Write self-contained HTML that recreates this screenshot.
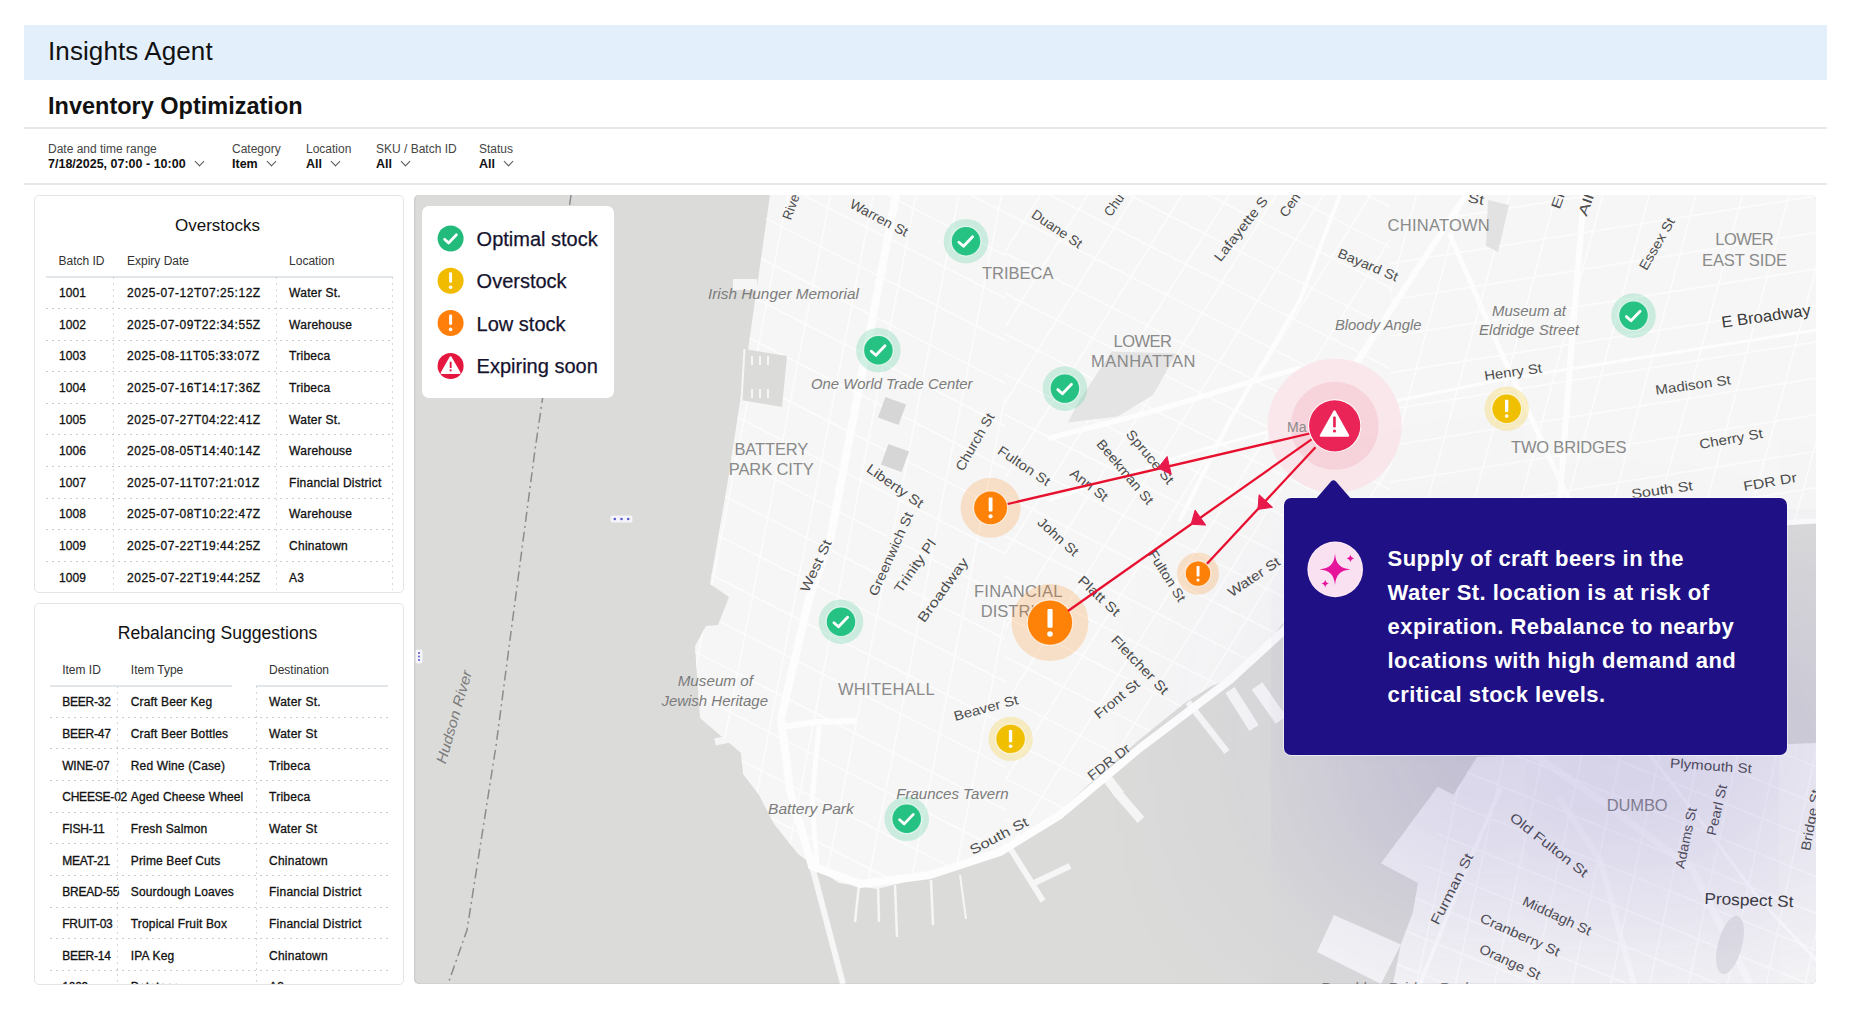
<!DOCTYPE html>
<html><head><meta charset="utf-8">
<style>
*{box-sizing:border-box;margin:0;padding:0}
html,body{width:1850px;height:1014px;overflow:hidden;background:#fff;font-family:"Liberation Sans",sans-serif;color:#111}
.abs{position:absolute}
#hdr{left:24px;top:25px;width:1803px;height:55px;background:#e3f0fc}
#hdr span{position:absolute;left:24px;top:11px;font-size:26px;color:#111;letter-spacing:0.1px}
#title{left:48px;top:94.5px;font-size:23.5px;font-weight:700;color:#111;line-height:1}
.hline{height:2px;background:#e6e8ea;left:24px;width:1803px}
.flt{font-size:12px;color:#444;line-height:14px}
.flt b{display:block;color:#111;font-size:12.5px;line-height:16px}
.chev{display:inline-block;width:7px;height:7px;border-right:1.3px solid #333;border-bottom:1.3px solid #333;transform:rotate(45deg);margin-left:10px;position:relative;top:-3px;border-color:#555}
.panel{left:34px;width:370px;border:1.5px solid #e2e4e6;border-radius:5px;background:#fff;overflow:hidden}
.panel>div{position:absolute;margin-left:-1.5px;margin-top:-1.5px}
.ptitle{left:0;width:100%;text-align:center;font-size:17px;color:#111;line-height:1}
.th{font-size:12px;color:#333;line-height:1;white-space:nowrap}
.td{font-size:12px;color:#111;line-height:1;-webkit-text-stroke:0.3px #111;white-space:nowrap;letter-spacing:0.62px}
.solid{height:2px;background:#e3e6e9}
.dotH{height:1px;background:repeating-linear-gradient(90deg,#c9cdd1 0 2px,transparent 2px 6px)}
.dotV{width:1px;background:repeating-linear-gradient(180deg,#d5d8db 0 2px,transparent 2px 6px)}
#map{left:414px;top:195px;width:1402px;height:789px;border-radius:5px;overflow:hidden;background:#d9d9d9}
#map svg{position:absolute;left:0;top:0}
#legend{left:422px;top:206px;width:192px;height:192px;background:#fff;border-radius:7px}
.lg{position:absolute;left:54.6px;font-size:20px;color:#15132e;line-height:1;white-space:nowrap;-webkit-text-stroke:0.25px #15132e}
#callout{left:1284px;top:498px;width:503px;height:257px;background:#1f1185;border-radius:7px;box-shadow:0 0 0 1px rgba(255,255,255,0.55)}
#callout p{position:absolute;left:103.5px;top:44px;font-size:22px;font-weight:700;color:#fff;line-height:34px;letter-spacing:0.46px;white-space:nowrap}

</style></head>
<body>
<div id="hdr" class="abs"><span>Insights Agent</span></div>
<div id="title" class="abs">Inventory Optimization</div>
<div class="abs hline" style="top:127px"></div>
<div class="abs flt" style="left:48px;top:142px">Date and time range<b>7/18/2025, 07:00 - 10:00<i class="chev"></i></b></div>
<div class="abs flt" style="left:232px;top:142px">Category<b>Item<i class="chev"></i></b></div>
<div class="abs flt" style="left:306px;top:142px">Location<b>All<i class="chev"></i></b></div>
<div class="abs flt" style="left:376px;top:142px">SKU / Batch ID<b>All<i class="chev"></i></b></div>
<div class="abs flt" style="left:479px;top:142px">Status<b>All<i class="chev"></i></b></div>
<div class="abs hline" style="top:183px"></div>
<div id="p1" class="abs panel" style="top:195px;height:398px">
<div class="ptitle" style="top:22.5px">Overstocks</div>
<div class="th" style="left:25.0px;top:60.1px">Batch ID</div>
<div class="th" style="left:93.5px;top:60.1px">Expiry Date</div>
<div class="th" style="left:255.6px;top:60.1px">Location</div>
<div class="solid" style="left:12px;top:81px;width:347px"></div>
<div class="td" style="left:25.5px;top:92.7px;letter-spacing:0.1px">1001</div>
<div class="td" style="left:93.5px;top:92.7px;letter-spacing:0.55px">2025-07-12T07:25:12Z</div>
<div class="td" style="left:255.6px;top:92.7px;letter-spacing:0.25px">Water St.</div>
<div class="dotH" style="left:12px;top:113.5px;width:347px"></div>
<div class="td" style="left:25.5px;top:124.3px;letter-spacing:0.1px">1002</div>
<div class="td" style="left:93.5px;top:124.3px;letter-spacing:0.55px">2025-07-09T22:34:55Z</div>
<div class="td" style="left:255.6px;top:124.3px;letter-spacing:0.25px">Warehouse</div>
<div class="dotH" style="left:12px;top:145.1px;width:347px"></div>
<div class="td" style="left:25.5px;top:155.9px;letter-spacing:0.1px">1003</div>
<div class="td" style="left:93.5px;top:155.9px;letter-spacing:0.55px">2025-08-11T05:33:07Z</div>
<div class="td" style="left:255.6px;top:155.9px;letter-spacing:0.25px">Tribeca</div>
<div class="dotH" style="left:12px;top:176.7px;width:347px"></div>
<div class="td" style="left:25.5px;top:187.5px;letter-spacing:0.1px">1004</div>
<div class="td" style="left:93.5px;top:187.5px;letter-spacing:0.55px">2025-07-16T14:17:36Z</div>
<div class="td" style="left:255.6px;top:187.5px;letter-spacing:0.25px">Tribeca</div>
<div class="dotH" style="left:12px;top:208.3px;width:347px"></div>
<div class="td" style="left:25.5px;top:219.1px;letter-spacing:0.1px">1005</div>
<div class="td" style="left:93.5px;top:219.1px;letter-spacing:0.55px">2025-07-27T04:22:41Z</div>
<div class="td" style="left:255.6px;top:219.1px;letter-spacing:0.25px">Water St.</div>
<div class="dotH" style="left:12px;top:239.9px;width:347px"></div>
<div class="td" style="left:25.5px;top:250.7px;letter-spacing:0.1px">1006</div>
<div class="td" style="left:93.5px;top:250.7px;letter-spacing:0.55px">2025-08-05T14:40:14Z</div>
<div class="td" style="left:255.6px;top:250.7px;letter-spacing:0.25px">Warehouse</div>
<div class="dotH" style="left:12px;top:271.5px;width:347px"></div>
<div class="td" style="left:25.5px;top:282.3px;letter-spacing:0.1px">1007</div>
<div class="td" style="left:93.5px;top:282.3px;letter-spacing:0.55px">2025-07-11T07:21:01Z</div>
<div class="td" style="left:255.6px;top:282.3px;letter-spacing:0.25px">Financial District</div>
<div class="dotH" style="left:12px;top:303.1px;width:347px"></div>
<div class="td" style="left:25.5px;top:313.9px;letter-spacing:0.1px">1008</div>
<div class="td" style="left:93.5px;top:313.9px;letter-spacing:0.55px">2025-07-08T10:22:47Z</div>
<div class="td" style="left:255.6px;top:313.9px;letter-spacing:0.25px">Warehouse</div>
<div class="dotH" style="left:12px;top:334.7px;width:347px"></div>
<div class="td" style="left:25.5px;top:345.5px;letter-spacing:0.1px">1009</div>
<div class="td" style="left:93.5px;top:345.5px;letter-spacing:0.55px">2025-07-22T19:44:25Z</div>
<div class="td" style="left:255.6px;top:345.5px;letter-spacing:0.25px">Chinatown</div>
<div class="dotH" style="left:12px;top:366.3px;width:347px"></div>
<div class="td" style="left:25.5px;top:377.1px;letter-spacing:0.1px">1009</div>
<div class="td" style="left:93.5px;top:377.1px;letter-spacing:0.55px">2025-07-22T19:44:25Z</div>
<div class="td" style="left:255.6px;top:377.1px;letter-spacing:0.25px">A3</div>
<div class="dotV" style="left:79.0px;top:82px;height:313px"></div>
<div class="dotV" style="left:242.5px;top:82px;height:313px"></div>
<div class="dotV" style="left:358.2px;top:82px;height:313px"></div>
</div>
<div id="p2" class="abs panel" style="top:603px;height:382px">
<div class="ptitle" style="top:22.8px;font-size:17.6px">Rebalancing Suggestions</div>
<div class="th" style="left:28.7px;top:61.2px">Item ID</div>
<div class="th" style="left:97.3px;top:61.2px">Item Type</div>
<div class="th" style="left:235.5px;top:61.2px">Destination</div>
<div class="solid" style="left:16px;top:82px;width:182px"></div>
<div class="solid" style="left:222.5px;top:82px;width:131.5px"></div>
<div class="td" style="left:28.7px;top:93.9px;letter-spacing:-0.2px">BEER-32</div>
<div class="td" style="left:97.3px;top:93.9px;letter-spacing:0.15px">Craft Beer Keg</div>
<div class="td" style="left:235.5px;top:93.9px;letter-spacing:0.25px">Water St.</div>
<div class="dotH" style="left:16px;top:114.3px;width:338px"></div>
<div class="td" style="left:28.7px;top:125.6px;letter-spacing:-0.2px">BEER-47</div>
<div class="td" style="left:97.3px;top:125.6px;letter-spacing:0.15px">Craft Beer Bottles</div>
<div class="td" style="left:235.5px;top:125.6px;letter-spacing:0.25px">Water St</div>
<div class="dotH" style="left:16px;top:145.9px;width:338px"></div>
<div class="td" style="left:28.7px;top:157.2px;letter-spacing:-0.2px">WINE-07</div>
<div class="td" style="left:97.3px;top:157.2px;letter-spacing:0.15px">Red Wine (Case)</div>
<div class="td" style="left:235.5px;top:157.2px;letter-spacing:0.25px">Tribeca</div>
<div class="dotH" style="left:16px;top:177.6px;width:338px"></div>
<div class="td" style="left:28.7px;top:188.9px;letter-spacing:-0.2px">CHEESE-02</div>
<div class="td" style="left:97.3px;top:188.9px;letter-spacing:0.15px">Aged Cheese Wheel</div>
<div class="td" style="left:235.5px;top:188.9px;letter-spacing:0.25px">Tribeca</div>
<div class="dotH" style="left:16px;top:209.2px;width:338px"></div>
<div class="td" style="left:28.7px;top:220.5px;letter-spacing:-0.2px">FISH-11</div>
<div class="td" style="left:97.3px;top:220.5px;letter-spacing:0.15px">Fresh Salmon</div>
<div class="td" style="left:235.5px;top:220.5px;letter-spacing:0.25px">Water St</div>
<div class="dotH" style="left:16px;top:240.9px;width:338px"></div>
<div class="td" style="left:28.7px;top:252.2px;letter-spacing:-0.2px">MEAT-21</div>
<div class="td" style="left:97.3px;top:252.2px;letter-spacing:0.15px">Prime Beef Cuts</div>
<div class="td" style="left:235.5px;top:252.2px;letter-spacing:0.25px">Chinatown</div>
<div class="dotH" style="left:16px;top:272.5px;width:338px"></div>
<div class="td" style="left:28.7px;top:283.8px;letter-spacing:-0.2px">BREAD-55</div>
<div class="td" style="left:97.3px;top:283.8px;letter-spacing:0.15px">Sourdough Loaves</div>
<div class="td" style="left:235.5px;top:283.8px;letter-spacing:0.25px">Financial District</div>
<div class="dotH" style="left:16px;top:304.2px;width:338px"></div>
<div class="td" style="left:28.7px;top:315.5px;letter-spacing:-0.2px">FRUIT-03</div>
<div class="td" style="left:97.3px;top:315.5px;letter-spacing:0.15px">Tropical Fruit Box</div>
<div class="td" style="left:235.5px;top:315.5px;letter-spacing:0.25px">Financial District</div>
<div class="dotH" style="left:16px;top:335.8px;width:338px"></div>
<div class="td" style="left:28.7px;top:347.1px;letter-spacing:-0.2px">BEER-14</div>
<div class="td" style="left:97.3px;top:347.1px;letter-spacing:0.15px">IPA Keg</div>
<div class="td" style="left:235.5px;top:347.1px;letter-spacing:0.25px">Chinatown</div>
<div class="dotH" style="left:16px;top:367.5px;width:338px"></div>
<div class="td" style="left:28.7px;top:378.8px;letter-spacing:-0.2px">1009</div>
<div class="td" style="left:97.3px;top:378.8px;letter-spacing:0.15px">Potatoes</div>
<div class="td" style="left:235.5px;top:378.8px;letter-spacing:0.25px">A3</div>
<div class="dotH" style="left:16px;top:399.1px;width:338px"></div>
<div class="dotV" style="left:83.5px;top:83px;height:400px"></div>
<div class="dotV" style="left:222.0px;top:83px;height:400px"></div>
</div>
<div id="map" class="abs">
<svg width="1402" height="789" viewBox="414 195 1402 789">
<defs>
<clipPath id="cm"><path d="M770 195 L1816 195 L1816 521 L1500 540 L1300 600 L1275 634 L1242 672 L1210 687 L1186 702 L1139 740 L1088 785 L1050 820 L1010 845 L996 857 L957 869 L877 889 L839 883 L818 869 L798 854 L774 824 L759 795 L743 774 L741 753 L728 742 L700 718 L695 646 L706 626 L718 625 L729 597 L710 584 L728 480 L749 343 Z"/></clipPath>
<clipPath id="cb"><path d="M1816 743 L1816 984 L1393 984 L1400.8 944.6 L1413 912 L1418 883 L1452 797 L1477 757 Z"/></clipPath>
</defs>
<rect x="414" y="195" width="1402" height="789" fill="#dbdbda"/>
<path d="M770 195 L1816 195 L1816 521 L1500 540 L1300 600 L1275 634 L1242 672 L1210 687 L1186 702 L1139 740 L1088 785 L1050 820 L1010 845 L996 857 L957 869 L877 889 L839 883 L818 869 L798 854 L774 824 L759 795 L743 774 L741 753 L728 742 L700 718 L695 646 L706 626 L718 625 L729 597 L710 584 L728 480 L749 343 Z" fill="#f6f6f6"/>
<path d="M1816 743 L1816 984 L1393 984 L1400.8 944.6 L1413 912 L1418 883 L1452 797 L1477 757 Z" fill="#f6f6f6"/>
<path d="M1437.7 786.8 L1457.5 796.7 L1418 883 L1381 863.2 Z" fill="#f6f6f6"/>
<path d="M1334 915 L1400.8 944.6 L1381 984 L1317 952 Z" fill="#f6f6f6"/>
<line x1="1010.0" y1="848.0" x2="1043.0" y2="901.0" stroke="#f6f6f6" stroke-width="6"/>
<line x1="1034.0" y1="883.0" x2="1070.0" y2="866.0" stroke="#f6f6f6" stroke-width="6"/>
<line x1="1188.0" y1="702.0" x2="1227.0" y2="752.0" stroke="#f6f6f6" stroke-width="6.5"/>
<line x1="1103.0" y1="773.0" x2="1120.0" y2="795.0" stroke="#f6f6f6" stroke-width="10"/>
<line x1="1115.0" y1="790.0" x2="1141.0" y2="820.0" stroke="#f6f6f6" stroke-width="9"/>
<line x1="1230.0" y1="690.0" x2="1254.0" y2="728.0" stroke="#f6f6f6" stroke-width="11"/>
<line x1="1257.0" y1="686.0" x2="1281.0" y2="720.0" stroke="#f6f6f6" stroke-width="13"/>
<line x1="715.0" y1="742.0" x2="753.0" y2="734.0" stroke="#f6f6f6" stroke-width="7"/>
<line x1="859.0" y1="885.0" x2="855.0" y2="922.0" stroke="#f6f6f6" stroke-width="2.5"/>
<line x1="878.0" y1="885.0" x2="879.0" y2="922.0" stroke="#f6f6f6" stroke-width="2.5"/>
<line x1="895.0" y1="885.0" x2="897.0" y2="937.0" stroke="#f6f6f6" stroke-width="2.5"/>
<line x1="931.0" y1="880.0" x2="933.0" y2="925.0" stroke="#f6f6f6" stroke-width="2.5"/>
<line x1="960.0" y1="875.0" x2="966.0" y2="919.0" stroke="#f6f6f6" stroke-width="2"/>
<rect x="733" y="279" width="24" height="11" fill="#f6f6f6"/>
<line x1="812.0" y1="866.0" x2="843.0" y2="984.0" stroke="#f6f6f6" stroke-width="6"/>
<g clip-path="url(#cm)"><clipPath id="z25"><rect x="690" y="195" width="315" height="705"/></clipPath><path clip-path="url(#z25)" d="M-83.2 1153.2L211.5 -362.8M-41.9 1161.2L252.7 -354.7M-0.7 1169.2L294.0 -346.7M40.5 1177.3L335.2 -338.7M81.7 1185.3L376.4 -330.7M123.0 1193.3L417.6 -322.7M164.2 1201.3L458.9 -314.7M205.4 1209.3L500.1 -306.7M246.7 1217.3L541.3 -298.6M287.9 1225.3L582.6 -290.6M329.1 1233.4L623.8 -282.6M370.3 1241.4L665.0 -274.6M411.6 1249.4L706.2 -266.6M452.8 1257.4L747.5 -258.6M494.0 1265.4L788.7 -250.6M535.2 1273.4L829.9 -242.5M576.5 1281.4L871.2 -234.5M617.7 1289.5L912.4 -226.5M658.9 1297.5L953.6 -218.5M700.2 1305.5L994.8 -210.5M741.4 1313.5L1036.1 -202.5M782.6 1321.5L1077.3 -194.5M823.8 1329.5L1118.5 -186.4M865.1 1337.5L1159.8 -178.4M906.3 1345.6L1201.0 -170.4M947.5 1353.6L1242.2 -162.4M988.8 1361.6L1283.4 -154.4M1030.0 1369.6L1324.7 -146.4M1071.2 1377.6L1365.9 -138.4M1112.4 1385.6L1407.1 -130.3M1153.7 1393.6L1448.3 -122.3M1194.9 1401.7L1489.6 -114.3M1236.1 1409.7L1530.8 -106.3M1277.4 1417.7L1572.0 -98.3M1318.6 1425.7L1613.3 -90.3M1359.8 1433.7L1654.5 -82.3M1401.0 1441.7L1695.7 -74.2M1442.3 1449.7L1736.9 -66.2" stroke="#fcfcfc" stroke-width="1.6" fill="none" opacity="1"/></g>
<g clip-path="url(#cm)"><clipPath id="z26"><rect x="690" y="195" width="315" height="705"/></clipPath><path clip-path="url(#z26)" d="M517.2 -505.2L1893.3 195.9M500.0 -471.3L1876.0 229.8M482.7 -437.5L1858.8 263.7M465.5 -403.6L1841.5 297.5M448.2 -369.7L1824.2 331.4M431.0 -335.9L1807.0 365.2M413.7 -302.0L1789.7 399.1M396.5 -268.2L1772.5 433.0M379.2 -234.3L1755.2 466.8M362.0 -200.4L1738.0 500.7M344.7 -166.6L1720.7 534.5M327.5 -132.7L1703.5 568.4M310.2 -98.9L1686.2 602.2M293.0 -65.0L1669.0 636.1M275.7 -31.2L1651.7 670.0M258.5 2.7L1634.5 703.8M241.2 36.6L1617.2 737.7M224.0 70.4L1600.0 771.5M206.7 104.3L1582.7 805.4M189.5 138.1L1565.5 839.3M172.2 172.0L1548.2 873.1M154.9 205.9L1531.0 907.0M137.7 239.7L1513.7 940.8M120.4 273.6L1496.5 974.7M103.2 307.4L1479.2 1008.5M85.9 341.3L1462.0 1042.4M68.7 375.1L1444.7 1076.3M51.4 409.0L1427.5 1110.1M34.2 442.9L1410.2 1144.0M16.9 476.7L1393.0 1177.8M-0.3 510.6L1375.7 1211.7M-17.6 544.4L1358.5 1245.6M-34.8 578.3L1341.2 1279.4M-52.1 612.2L1324.0 1313.3M-69.3 646.0L1306.7 1347.1M-86.6 679.9L1289.4 1381.0M-103.8 713.7L1272.2 1414.8M-121.1 747.6L1254.9 1448.7M-138.3 781.4L1237.7 1482.6M-155.6 815.3L1220.4 1516.4M-172.8 849.2L1203.2 1550.3M-190.1 883.0L1185.9 1584.1" stroke="#fcfcfc" stroke-width="1.6" fill="none" opacity="1"/></g>
<g clip-path="url(#cm)"><clipPath id="z27"><rect x="1005" y="195" width="385" height="705"/></clipPath><path clip-path="url(#z27)" d="M59.5 783.6L910.8 -578.8M93.4 804.8L944.7 -557.7M127.3 826.0L978.7 -536.5M161.2 847.2L1012.6 -515.3M195.2 868.4L1046.5 -494.1M229.1 889.6L1080.4 -472.9M263.0 910.8L1114.3 -451.7M296.9 932.0L1148.3 -430.5M330.8 953.2L1182.2 -409.3M364.8 974.4L1216.1 -388.1M398.7 995.6L1250.0 -366.9M432.6 1016.7L1284.0 -345.7M466.5 1037.9L1317.9 -324.5M500.5 1059.1L1351.8 -303.3M534.4 1080.3L1385.7 -282.1M568.3 1101.5L1419.6 -260.9M602.2 1122.7L1453.6 -239.7M636.1 1143.9L1487.5 -218.5M670.1 1165.1L1521.4 -197.3M704.0 1186.3L1555.3 -176.1M737.9 1207.5L1589.2 -154.9M771.8 1228.7L1623.2 -133.7M805.8 1249.9L1657.1 -112.5M839.7 1271.1L1691.0 -91.3M873.6 1292.3L1724.9 -70.1M907.5 1313.5L1758.9 -48.9M941.4 1334.7L1792.8 -27.7M975.4 1355.9L1826.7 -6.5M1009.3 1377.1L1860.6 14.7M1043.2 1398.3L1894.5 35.9M1077.1 1419.5L1928.5 57.1M1111.0 1440.7L1962.4 78.3M1145.0 1461.9L1996.3 99.4M1178.9 1483.1L2030.2 120.6M1212.8 1504.3L2064.2 141.8M1246.7 1525.5L2098.1 163.0M1280.7 1546.7L2132.0 184.2M1314.6 1567.9L2165.9 205.4M1348.5 1589.1L2199.8 226.6M1382.4 1610.3L2233.8 247.8M1416.3 1631.5L2267.7 269.0M1450.3 1652.7L2301.6 290.2" stroke="#fcfcfc" stroke-width="1.6" fill="none" opacity="1"/></g>
<g clip-path="url(#cm)"><clipPath id="z28"><rect x="1005" y="195" width="385" height="705"/></clipPath><path clip-path="url(#z28)" d="M855.4 -550.5L2286.9 178.9M839.1 -518.4L2270.5 211.0M822.7 -486.3L2254.2 243.0M806.4 -454.2L2237.8 275.1M790.0 -422.2L2221.5 307.2M773.7 -390.1L2205.1 339.3M757.3 -358.0L2188.8 371.3M741.0 -325.9L2172.5 403.4M724.7 -293.9L2156.1 435.5M708.3 -261.8L2139.8 467.6M692.0 -229.7L2123.4 499.6M675.6 -197.6L2107.1 531.7M659.3 -165.6L2090.7 563.8M642.9 -133.5L2074.4 595.9M626.6 -101.4L2058.0 627.9M610.3 -69.3L2041.7 660.0M593.9 -37.3L2025.4 692.1M577.6 -5.2L2009.0 724.2M561.2 26.9L1992.7 756.3M544.9 59.0L1976.3 788.3M528.5 91.0L1960.0 820.4M512.2 123.1L1943.6 852.5M495.9 155.2L1927.3 884.6M479.5 187.3L1911.0 916.6M463.2 219.4L1894.6 948.7M446.8 251.4L1878.3 980.8M430.5 283.5L1861.9 1012.9M414.1 315.6L1845.6 1044.9M397.8 347.7L1829.2 1077.0M381.4 379.7L1812.9 1109.1M365.1 411.8L1796.5 1141.2M348.8 443.9L1780.2 1173.2M332.4 476.0L1763.9 1205.3M316.1 508.0L1747.5 1237.4M299.7 540.1L1731.2 1269.5M283.4 572.2L1714.8 1301.5M267.0 604.3L1698.5 1333.6M250.7 636.3L1682.1 1365.7M234.4 668.4L1665.8 1397.8M218.0 700.5L1649.5 1429.9M201.7 732.6L1633.1 1461.9M185.3 764.6L1616.8 1494.0M169.0 796.7L1600.4 1526.1M152.6 828.8L1584.1 1558.2M136.3 860.9L1567.7 1590.2M119.9 893.0L1551.4 1622.3" stroke="#fcfcfc" stroke-width="1.6" fill="none" opacity="1"/></g>
<g clip-path="url(#cm)"><clipPath id="z29"><rect x="1390" y="195" width="426" height="345"/></clipPath><path clip-path="url(#z29)" d="M896.1 745.6L1179.8 -313.4M939.5 757.2L1223.3 -301.8M983.0 768.9L1266.7 -290.1M1026.5 780.5L1310.2 -278.5M1069.9 792.2L1353.7 -266.8M1113.4 803.8L1397.1 -255.2M1156.9 815.5L1440.6 -243.5M1200.3 827.1L1484.1 -231.9M1243.8 838.8L1527.5 -220.2M1287.3 850.4L1571.0 -208.6M1330.7 862.1L1614.5 -196.9M1374.2 873.7L1657.9 -185.3M1417.7 885.4L1701.4 -173.6M1461.1 897.0L1744.9 -162.0M1504.6 908.6L1788.3 -150.4M1548.1 920.3L1831.8 -138.7M1591.5 931.9L1875.3 -127.1M1635.0 943.6L1918.7 -115.4M1678.5 955.2L1962.2 -103.8M1721.9 966.9L2005.7 -92.1M1765.4 978.5L2049.1 -80.5M1808.9 990.2L2092.6 -68.8M1852.3 1001.8L2136.1 -57.2M1895.8 1013.5L2179.5 -45.5M1939.3 1025.1L2223.0 -33.9M1982.7 1036.8L2266.5 -22.2" stroke="#fcfcfc" stroke-width="1.6" fill="none" opacity="1"/></g>
<g clip-path="url(#cm)"><clipPath id="z30"><rect x="1390" y="195" width="426" height="345"/></clipPath><path clip-path="url(#z30)" d="M972.7 -107.8L2055.6 -279.3M978.3 -72.2L2061.2 -243.7M984.0 -36.6L2066.8 -208.1M989.6 -1.1L2072.5 -172.6M995.2 34.5L2078.1 -137.0M1000.9 70.0L2083.7 -101.5M1006.5 105.6L2089.4 -65.9M1012.1 141.1L2095.0 -30.4M1017.8 176.7L2100.6 5.2M1023.4 212.3L2106.3 40.7M1029.0 247.8L2111.9 76.3M1034.7 283.4L2117.5 111.9M1040.3 318.9L2123.2 147.4M1045.9 354.5L2128.8 183.0M1051.6 390.0L2134.4 218.5M1057.2 425.6L2140.1 254.1M1062.8 461.2L2145.7 289.6M1068.5 496.7L2151.3 325.2M1074.1 532.3L2156.9 360.8M1079.7 567.8L2162.6 396.3M1085.3 603.4L2168.2 431.9M1091.0 638.9L2173.8 467.4M1096.6 674.5L2179.5 503.0M1102.2 710.1L2185.1 538.5M1107.9 745.6L2190.7 574.1M1113.5 781.2L2196.4 609.7M1119.1 816.7L2202.0 645.2M1124.8 852.3L2207.6 680.8M1130.4 887.8L2213.3 716.3M1136.0 923.4L2218.9 751.9M1141.7 959.0L2224.5 787.4M1147.3 994.5L2230.2 823.0" stroke="#fcfcfc" stroke-width="1.6" fill="none" opacity="1"/></g>
<g clip-path="url(#cb)"><clipPath id="z31"><rect x="1380" y="740" width="436" height="244"/></clipPath><path clip-path="url(#z31)" d="M973.7 1240.1L1181.5 262.7M1010.9 1248.0L1218.7 270.6M1048.1 1255.9L1255.8 278.5M1085.3 1263.8L1293.0 286.4M1122.4 1271.7L1330.2 294.3M1159.6 1279.6L1367.4 302.2M1196.8 1287.5L1404.5 310.1M1233.9 1295.4L1441.7 318.0M1271.1 1303.3L1478.9 325.9M1308.3 1311.2L1516.0 333.8M1345.4 1319.1L1553.2 341.7M1382.6 1327.0L1590.4 349.6M1419.8 1334.9L1627.5 357.5M1457.0 1342.8L1664.7 365.4M1494.1 1350.7L1701.9 373.3M1531.3 1358.6L1739.0 381.2M1568.5 1366.5L1776.2 389.1M1605.6 1374.4L1813.4 397.0M1642.8 1382.3L1850.6 404.9M1680.0 1390.2L1887.7 412.8M1717.1 1398.1L1924.9 420.7M1754.3 1406.0L1962.1 428.6M1791.5 1413.9L1999.2 436.5M1828.6 1421.8L2036.4 444.4M1865.8 1429.7L2073.6 452.3M1903.0 1437.6L2110.7 460.2M1940.2 1445.5L2147.9 468.1M1977.3 1453.4L2185.1 476.0" stroke="#fcfcfc" stroke-width="1.6" fill="none" opacity="1"/></g>
<g clip-path="url(#cb)"><clipPath id="z32"><rect x="1380" y="740" width="436" height="244"/></clipPath><path clip-path="url(#z32)" d="M1325.8 202.0L2252.3 576.3M1313.1 233.5L2239.6 607.8M1300.3 265.0L2226.8 639.4M1287.6 296.5L2214.1 670.9M1274.9 328.1L2201.4 702.4M1262.1 359.6L2188.6 733.9M1249.4 391.1L2175.9 765.4M1236.6 422.6L2163.1 797.0M1223.9 454.2L2150.4 828.5M1211.2 485.7L2137.7 860.0M1198.4 517.2L2124.9 891.5M1185.7 548.7L2112.2 923.1M1173.0 580.3L2099.5 954.6M1160.2 611.8L2086.7 986.1M1147.5 643.3L2074.0 1017.6M1134.7 674.8L2061.3 1049.2M1122.0 706.4L2048.5 1080.7M1109.3 737.9L2035.8 1112.2M1096.5 769.4L2023.0 1143.7M1083.8 800.9L2010.3 1175.3M1071.1 832.5L1997.6 1206.8M1058.3 864.0L1984.8 1238.3M1045.6 895.5L1972.1 1269.8M1032.9 927.0L1959.4 1301.4M1020.1 958.6L1946.6 1332.9M1007.4 990.1L1933.9 1364.4M994.6 1021.6L1921.1 1395.9M981.9 1053.1L1908.4 1427.5M969.2 1084.6L1895.7 1459.0M956.4 1116.2L1882.9 1490.5" stroke="#fcfcfc" stroke-width="1.6" fill="none" opacity="1"/></g>
<path d="M896.0 195.0 L830.0 540.0 L809.0 599.0 L781.0 718.0 L790.0 790.0 L812.0 866.0" stroke="#fdfdfd" stroke-width="8" fill="none" stroke-linejoin="round" stroke-linecap="round" opacity="1"/>
<path d="M782.0 727.0 L815.0 722.0 L853.0 721.0" stroke="#fdfdfd" stroke-width="6" fill="none" stroke-linejoin="round" stroke-linecap="round" opacity="1"/>
<path d="M819.0 727.0 L812.0 800.0 L817.0 866.0" stroke="#fdfdfd" stroke-width="5" fill="none" stroke-linejoin="round" stroke-linecap="round" opacity="1"/>
<path d="M812.0 866.0 L860.0 884.0 L930.0 875.0 L1000.0 852.0 L1060.0 815.0 L1140.0 748.0 L1230.0 680.0 L1290.0 625.0" stroke="#fdfdfd" stroke-width="8" fill="none" stroke-linejoin="round" stroke-linecap="round" opacity="1"/>
<path d="M1466.0 195.0 L1420.0 265.0 L1364.0 351.0 L1330.0 400.0" stroke="#fdfdfd" stroke-width="6" fill="none" stroke-linejoin="round" stroke-linecap="round" opacity="1"/>
<path d="M1450.0 235.0 L1500.0 350.0 L1569.0 500.0" stroke="#fdfdfd" stroke-width="5" fill="none" stroke-linejoin="round" stroke-linecap="round" opacity="1"/>
<path d="M1300.0 600.0 L1500.0 540.0 L1816.0 521.0" stroke="#fdfdfd" stroke-width="5" fill="none" stroke-linejoin="round" stroke-linecap="round" opacity="1"/>
<path d="M1584.0 195.0 L1572.0 340.0 L1560.0 496.0" stroke="#fdfdfd" stroke-width="6" fill="none" stroke-linejoin="round" stroke-linecap="round" opacity="1"/>
<path d="M1340.0 195.0 L1300.0 300.0 L1230.0 420.0 L1180.0 520.0" stroke="#fdfdfd" stroke-width="4" fill="none" stroke-linejoin="round" stroke-linecap="round" opacity="1"/>
<path d="M1050.0 500.0 L1200.0 450.0 L1350.0 410.0 L1500.0 380.0 L1816.0 330.0" stroke="#fdfdfd" stroke-width="3" fill="none" stroke-linejoin="round" stroke-linecap="round" opacity="1"/>
<path d="M1050.0 438.0 L1147.0 413.0 L1240.0 385.0 L1300.0 368.0" stroke="#fdfdfd" stroke-width="5" fill="none" stroke-linejoin="round" stroke-linecap="round" opacity="1"/>
<path d="M1530.0 752.0 L1600.0 800.0 L1692.0 869.0 L1750.0 984.0" stroke="#fdfdfd" stroke-width="7" fill="none" stroke-linejoin="round" stroke-linecap="round" opacity="0.8"/>
<path d="M1560.0 800.0 L1600.0 860.0 L1634.0 984.0" stroke="#fdfdfd" stroke-width="6" fill="none" stroke-linejoin="round" stroke-linecap="round" opacity="0.7"/>
<path d="M1650.0 755.0 L1700.0 820.0 L1760.0 900.0 L1816.0 960.0" stroke="#fdfdfd" stroke-width="3" fill="none" stroke-linejoin="round" stroke-linecap="round" opacity="1"/>
<path d="M1420.0 984.0 L1470.0 860.0 L1500.0 790.0" stroke="#fdfdfd" stroke-width="4" fill="none" stroke-linejoin="round" stroke-linecap="round" opacity="1"/>
<ellipse cx="1730" cy="945" rx="12" ry="30" fill="#e3e3e6" transform="rotate(15 1730 945)"/>
<path d="M1068 422.6 L1078 402.8 L1111.6 351.6 L1176.7 353.5 L1153 395 L1117.5 416.6 Z" fill="#e4e4e4"/>
<rect x="881" y="400" width="22" height="22" fill="#d6d6d6" transform="rotate(20 892 411)"/>
<rect x="884" y="447" width="22" height="22" fill="#d6d6d6" transform="rotate(20 895 458)"/>
<path d="M744 349 L787 356 L782 407 L741 400 Z" fill="#dbdbda"/>
<line x1="744.5" y1="349" x2="741.5" y2="400" stroke="#f6f6f6" stroke-width="2"/>
<line x1="752" y1="356" x2="752" y2="365" stroke="#f6f6f6" stroke-width="2"/>
<line x1="760" y1="356" x2="760" y2="365" stroke="#f6f6f6" stroke-width="2"/>
<line x1="768" y1="356" x2="768" y2="365" stroke="#f6f6f6" stroke-width="2"/>
<line x1="752" y1="398" x2="752" y2="389" stroke="#f6f6f6" stroke-width="2"/>
<line x1="760" y1="398" x2="760" y2="389" stroke="#f6f6f6" stroke-width="2"/>
<line x1="768" y1="398" x2="768" y2="389" stroke="#f6f6f6" stroke-width="2"/>
<path d="M1488 200 L1509 205 L1498 252 L1486 246 Z" fill="#e2e2e2"/>
<rect x="610.5" y="515.5" width="22" height="7" rx="2" fill="#f4f4fa"/>
<circle cx="614.8" cy="519" r="1.3" fill="#5a5ad0"/>
<circle cx="621.5" cy="519" r="1.3" fill="#5a5ad0"/>
<circle cx="628.2" cy="519" r="1.3" fill="#5a5ad0"/>
<rect x="415.5" y="649.5" width="7" height="14" rx="2" fill="#f4f4fa"/>
<circle cx="419" cy="653" r="1" fill="#5a5ad0"/>
<circle cx="419" cy="656.5" r="1" fill="#5a5ad0"/>
<circle cx="419" cy="660" r="1" fill="#5a5ad0"/>
<path d="M571 195 L554 320 L535 450 L496 746 L467 930 L448 984" stroke="#8c8c8c" stroke-width="1.5" fill="none" stroke-dasharray="10 4 2 4"/>
<g font-family="Liberation Sans, sans-serif">
<text x="879.0" y="218.0" transform="rotate(28 879.0 218.0)" text-anchor="middle" dominant-baseline="central" font-size="13.5" fill="#4d4d4d" font-style="normal" textLength="64" lengthAdjust="spacingAndGlyphs">Warren St</text>
<text x="1057.0" y="229.0" transform="rotate(34 1057.0 229.0)" text-anchor="middle" dominant-baseline="central" font-size="13.5" fill="#4d4d4d" font-style="normal" textLength="58" lengthAdjust="spacingAndGlyphs">Duane St</text>
<text x="1241.0" y="229.0" transform="rotate(-52 1241.0 229.0)" text-anchor="middle" dominant-baseline="central" font-size="13.5" fill="#4d4d4d" font-style="normal" textLength="78" lengthAdjust="spacingAndGlyphs">Lafayette S</text>
<text x="791.0" y="207.0" transform="rotate(-70 791.0 207.0)" text-anchor="middle" dominant-baseline="central" font-size="13.5" fill="#4d4d4d" font-style="normal" textLength="26" lengthAdjust="spacingAndGlyphs">Rive</text>
<text x="1114.0" y="205.0" transform="rotate(-55 1114.0 205.0)" text-anchor="middle" dominant-baseline="central" font-size="13.5" fill="#4d4d4d" font-style="normal" textLength="24" lengthAdjust="spacingAndGlyphs">Chu</text>
<text x="1290.0" y="205.0" transform="rotate(-55 1290.0 205.0)" text-anchor="middle" dominant-baseline="central" font-size="13.5" fill="#4d4d4d" font-style="normal" textLength="26" lengthAdjust="spacingAndGlyphs">Cen</text>
<text x="1368.0" y="265.0" transform="rotate(23 1368.0 265.0)" text-anchor="middle" dominant-baseline="central" font-size="13.5" fill="#4d4d4d" font-style="normal" textLength="64" lengthAdjust="spacingAndGlyphs">Bayard St</text>
<text x="1657.0" y="244.0" transform="rotate(-60 1657.0 244.0)" text-anchor="middle" dominant-baseline="central" font-size="13.5" fill="#4d4d4d" font-style="normal" textLength="58" lengthAdjust="spacingAndGlyphs">Essex St</text>
<text x="1513.0" y="372.0" transform="rotate(-8 1513.0 372.0)" text-anchor="middle" dominant-baseline="central" font-size="13.5" fill="#4d4d4d" font-style="normal" textLength="58" lengthAdjust="spacingAndGlyphs">Henry St</text>
<text x="1693.0" y="385.0" transform="rotate(-8 1693.0 385.0)" text-anchor="middle" dominant-baseline="central" font-size="13.5" fill="#4d4d4d" font-style="normal" textLength="76" lengthAdjust="spacingAndGlyphs">Madison St</text>
<text x="1731.0" y="439.0" transform="rotate(-10 1731.0 439.0)" text-anchor="middle" dominant-baseline="central" font-size="13.5" fill="#4d4d4d" font-style="normal" textLength="64" lengthAdjust="spacingAndGlyphs">Cherry St</text>
<text x="1770.0" y="482.0" transform="rotate(-10 1770.0 482.0)" text-anchor="middle" dominant-baseline="central" font-size="13.5" fill="#4d4d4d" font-style="normal" textLength="54" lengthAdjust="spacingAndGlyphs">FDR Dr</text>
<text x="1662.0" y="490.0" transform="rotate(-8 1662.0 490.0)" text-anchor="middle" dominant-baseline="central" font-size="13.5" fill="#4d4d4d" font-style="normal" textLength="62" lengthAdjust="spacingAndGlyphs">South St</text>
<text x="975.0" y="442.0" transform="rotate(-60 975.0 442.0)" text-anchor="middle" dominant-baseline="central" font-size="13.5" fill="#4d4d4d" font-style="normal" textLength="64" lengthAdjust="spacingAndGlyphs">Church St</text>
<text x="1024.0" y="466.0" transform="rotate(34 1024.0 466.0)" text-anchor="middle" dominant-baseline="central" font-size="13.5" fill="#4d4d4d" font-style="normal" textLength="60" lengthAdjust="spacingAndGlyphs">Fulton St</text>
<text x="1089.0" y="485.0" transform="rotate(38 1089.0 485.0)" text-anchor="middle" dominant-baseline="central" font-size="13.5" fill="#4d4d4d" font-style="normal" textLength="44" lengthAdjust="spacingAndGlyphs">Ann St</text>
<text x="1125.0" y="472.0" transform="rotate(50 1125.0 472.0)" text-anchor="middle" dominant-baseline="central" font-size="13.5" fill="#4d4d4d" font-style="normal" textLength="80" lengthAdjust="spacingAndGlyphs">Beekman St</text>
<text x="1150.0" y="457.0" transform="rotate(50 1150.0 457.0)" text-anchor="middle" dominant-baseline="central" font-size="13.5" fill="#4d4d4d" font-style="normal" textLength="66" lengthAdjust="spacingAndGlyphs">Spruce St</text>
<text x="895.0" y="486.0" transform="rotate(35 895.0 486.0)" text-anchor="middle" dominant-baseline="central" font-size="13.5" fill="#4d4d4d" font-style="normal" textLength="66" lengthAdjust="spacingAndGlyphs">Liberty St</text>
<text x="816.0" y="566.0" transform="rotate(-65 816.0 566.0)" text-anchor="middle" dominant-baseline="central" font-size="13.5" fill="#4d4d4d" font-style="normal" textLength="56" lengthAdjust="spacingAndGlyphs">West St</text>
<text x="891.0" y="554.0" transform="rotate(-66 891.0 554.0)" text-anchor="middle" dominant-baseline="central" font-size="13.5" fill="#4d4d4d" font-style="normal" textLength="90" lengthAdjust="spacingAndGlyphs">Greenwich St</text>
<text x="915.0" y="566.0" transform="rotate(-55 915.0 566.0)" text-anchor="middle" dominant-baseline="central" font-size="13.5" fill="#4d4d4d" font-style="normal" textLength="62" lengthAdjust="spacingAndGlyphs">Trinity Pl</text>
<text x="943.0" y="590.0" transform="rotate(-54 943.0 590.0)" text-anchor="middle" dominant-baseline="central" font-size="13.5" fill="#4d4d4d" font-style="normal" textLength="76" lengthAdjust="spacingAndGlyphs">Broadway</text>
<text x="1058.0" y="537.0" transform="rotate(42 1058.0 537.0)" text-anchor="middle" dominant-baseline="central" font-size="13.5" fill="#4d4d4d" font-style="normal" textLength="50" lengthAdjust="spacingAndGlyphs">John St</text>
<text x="1099.0" y="596.0" transform="rotate(43 1099.0 596.0)" text-anchor="middle" dominant-baseline="central" font-size="13.5" fill="#4d4d4d" font-style="normal" textLength="52" lengthAdjust="spacingAndGlyphs">Platt St</text>
<text x="1167.0" y="576.0" transform="rotate(58 1167.0 576.0)" text-anchor="middle" dominant-baseline="central" font-size="13.5" fill="#4d4d4d" font-style="normal" textLength="58" lengthAdjust="spacingAndGlyphs">Fulton St</text>
<text x="1254.0" y="577.0" transform="rotate(-34 1254.0 577.0)" text-anchor="middle" dominant-baseline="central" font-size="13.5" fill="#4d4d4d" font-style="normal" textLength="60" lengthAdjust="spacingAndGlyphs">Water St</text>
<text x="1140.0" y="665.0" transform="rotate(46 1140.0 665.0)" text-anchor="middle" dominant-baseline="central" font-size="13.5" fill="#4d4d4d" font-style="normal" textLength="76" lengthAdjust="spacingAndGlyphs">Fletcher St</text>
<text x="1117.0" y="699.0" transform="rotate(-39 1117.0 699.0)" text-anchor="middle" dominant-baseline="central" font-size="13.5" fill="#4d4d4d" font-style="normal" textLength="54" lengthAdjust="spacingAndGlyphs">Front St</text>
<text x="986.0" y="708.0" transform="rotate(-15 986.0 708.0)" text-anchor="middle" dominant-baseline="central" font-size="13.5" fill="#4d4d4d" font-style="normal" textLength="66" lengthAdjust="spacingAndGlyphs">Beaver St</text>
<text x="999.0" y="836.0" transform="rotate(-28 999.0 836.0)" text-anchor="middle" dominant-baseline="central" font-size="13.5" fill="#4d4d4d" font-style="normal" textLength="64" lengthAdjust="spacingAndGlyphs">South St</text>
<text x="1109.0" y="762.0" transform="rotate(-38 1109.0 762.0)" text-anchor="middle" dominant-baseline="central" font-size="13.5" fill="#4d4d4d" font-style="normal" textLength="50" lengthAdjust="spacingAndGlyphs">FDR Dr</text>
<text x="1711.0" y="766.0" transform="rotate(4 1711.0 766.0)" text-anchor="middle" dominant-baseline="central" font-size="13.5" fill="#4d4d4d" font-style="normal" textLength="82" lengthAdjust="spacingAndGlyphs">Plymouth St</text>
<text x="1549.0" y="845.0" transform="rotate(38 1549.0 845.0)" text-anchor="middle" dominant-baseline="central" font-size="13.5" fill="#4d4d4d" font-style="normal" textLength="95" lengthAdjust="spacingAndGlyphs">Old Fulton St</text>
<text x="1686.0" y="838.0" transform="rotate(-78 1686.0 838.0)" text-anchor="middle" dominant-baseline="central" font-size="13.5" fill="#4d4d4d" font-style="normal" textLength="62" lengthAdjust="spacingAndGlyphs">Adams St</text>
<text x="1717.0" y="810.0" transform="rotate(-77 1717.0 810.0)" text-anchor="middle" dominant-baseline="central" font-size="13.5" fill="#4d4d4d" font-style="normal" textLength="52" lengthAdjust="spacingAndGlyphs">Pearl St</text>
<text x="1811.0" y="820.0" transform="rotate(-80 1811.0 820.0)" text-anchor="middle" dominant-baseline="central" font-size="13.5" fill="#4d4d4d" font-style="normal" textLength="62" lengthAdjust="spacingAndGlyphs">Bridge St</text>
<text x="1452.0" y="889.0" transform="rotate(-63 1452.0 889.0)" text-anchor="middle" dominant-baseline="central" font-size="13.5" fill="#4d4d4d" font-style="normal" textLength="78" lengthAdjust="spacingAndGlyphs">Furman St</text>
<text x="1557.0" y="916.0" transform="rotate(25 1557.0 916.0)" text-anchor="middle" dominant-baseline="central" font-size="13.5" fill="#4d4d4d" font-style="normal" textLength="74" lengthAdjust="spacingAndGlyphs">Middagh St</text>
<text x="1520.0" y="935.0" transform="rotate(24 1520.0 935.0)" text-anchor="middle" dominant-baseline="central" font-size="13.5" fill="#4d4d4d" font-style="normal" textLength="86" lengthAdjust="spacingAndGlyphs">Cranberry St</text>
<text x="1510.0" y="962.0" transform="rotate(25 1510.0 962.0)" text-anchor="middle" dominant-baseline="central" font-size="13.5" fill="#4d4d4d" font-style="normal" textLength="66" lengthAdjust="spacingAndGlyphs">Orange St</text>
<text x="1476.0" y="199.0" transform="rotate(10 1476.0 199.0)" text-anchor="middle" dominant-baseline="central" font-size="13.5" fill="#4d4d4d" font-style="normal" textLength="16" lengthAdjust="spacingAndGlyphs">St</text>
<text x="1558.0" y="201.0" transform="rotate(-70 1558.0 201.0)" text-anchor="middle" dominant-baseline="central" font-size="13.5" fill="#4d4d4d" font-style="normal" textLength="16" lengthAdjust="spacingAndGlyphs">El</text>
<text x="1586.0" y="205.0" transform="rotate(-70 1586.0 205.0)" text-anchor="middle" dominant-baseline="central" font-size="13.5" fill="#4d4d4d" font-style="normal" textLength="22" lengthAdjust="spacingAndGlyphs">All</text>
<text x="1766.0" y="316.0" transform="rotate(-8 1766.0 316.0)" text-anchor="middle" dominant-baseline="central" font-size="16" fill="#3a3a3a" font-style="normal" textLength="90" lengthAdjust="spacingAndGlyphs">E Broadway</text>
<text x="1749.0" y="900.0" transform="rotate(2 1749.0 900.0)" text-anchor="middle" dominant-baseline="central" font-size="16" fill="#3a3a3a" font-style="normal" textLength="89" lengthAdjust="spacingAndGlyphs">Prospect St</text>
<text x="454.0" y="717.0" transform="rotate(-74 454.0 717.0)" text-anchor="middle" dominant-baseline="central" font-size="14.5" fill="#7c7c7c" font-style="italic" textLength="96" lengthAdjust="spacingAndGlyphs">Hudson River</text>
<text x="982.0" y="278.5" font-size="16.5" fill="#8a8a8a" textLength="71.5" lengthAdjust="spacing">TRIBECA</text>
<text x="1387.6" y="231.0" font-size="16.5" fill="#8a8a8a" textLength="102.1" lengthAdjust="spacing">CHINATOWN</text>
<text x="1715.3" y="244.6" font-size="16.5" fill="#8a8a8a" textLength="58.4" lengthAdjust="spacing">LOWER</text>
<text x="1702.0" y="265.7" font-size="16.5" fill="#8a8a8a" textLength="85.0" lengthAdjust="spacing">EAST SIDE</text>
<text x="1113.6" y="346.6" font-size="16.5" fill="#8a8a8a" textLength="58.2" lengthAdjust="spacing">LOWER</text>
<text x="1090.9" y="367.0" font-size="16.5" fill="#8a8a8a" textLength="104.5" lengthAdjust="spacing">MANHATTAN</text>
<text x="734.4" y="454.7" font-size="16.5" fill="#8a8a8a" textLength="73.9" lengthAdjust="spacing">BATTERY</text>
<text x="728.8" y="474.5" font-size="16.5" fill="#8a8a8a" textLength="85.0" lengthAdjust="spacing">PARK CITY</text>
<text x="1511.0" y="453.3" font-size="16.5" fill="#8a8a8a" textLength="115.6" lengthAdjust="spacing">TWO BRIDGES</text>
<text x="974.0" y="597.4" font-size="16.5" fill="#8a8a8a" textLength="88.4" lengthAdjust="spacing">FINANCIAL</text>
<text x="980.8" y="617.3" font-size="16.5" fill="#8a8a8a" textLength="76.2" lengthAdjust="spacing">DISTRICT</text>
<text x="838.0" y="694.5" font-size="16.5" fill="#8a8a8a" textLength="96.7" lengthAdjust="spacing">WHITEHALL</text>
<text x="1606.8" y="810.8" font-size="16.5" fill="#8a8a8a" textLength="60.8" lengthAdjust="spacing">DUMBO</text>
<text x="708.0" y="298.5" font-size="14.5" fill="#7c7c7c" font-style="italic" textLength="150.9" lengthAdjust="spacingAndGlyphs">Irish Hunger Memorial</text>
<text x="811.0" y="389.0" font-size="14.5" fill="#7c7c7c" font-style="italic" textLength="161.5" lengthAdjust="spacingAndGlyphs">One World Trade Center</text>
<text x="1334.9" y="329.6" font-size="14.5" fill="#7c7c7c" font-style="italic" textLength="86.7" lengthAdjust="spacingAndGlyphs">Bloody Angle</text>
<text x="1492.0" y="315.8" font-size="14.5" fill="#7c7c7c" font-style="italic" textLength="74.0" lengthAdjust="spacingAndGlyphs">Museum at</text>
<text x="1479.0" y="335.3" font-size="14.5" fill="#7c7c7c" font-style="italic" textLength="100.0" lengthAdjust="spacingAndGlyphs">Eldridge Street</text>
<text x="677.7" y="685.6" font-size="14.5" fill="#7c7c7c" font-style="italic" textLength="75.3" lengthAdjust="spacingAndGlyphs">Museum of</text>
<text x="661.4" y="706.3" font-size="14.5" fill="#7c7c7c" font-style="italic" textLength="106.6" lengthAdjust="spacingAndGlyphs">Jewish Heritage</text>
<text x="896.2" y="799.0" font-size="14.5" fill="#7c7c7c" font-style="italic" textLength="112.4" lengthAdjust="spacingAndGlyphs">Fraunces Tavern</text>
<text x="1320.0" y="993.0" font-size="14.5" fill="#7c7c7c" font-style="italic" textLength="152.0" lengthAdjust="spacingAndGlyphs">Brooklyn Bridge Park</text>
<text x="768.0" y="813.9" font-size="14.5" fill="#7c7c7c" font-style="italic" textLength="85.8" lengthAdjust="spacingAndGlyphs">Battery Park</text>
</g>
<circle cx="966" cy="241.2" r="22.3" fill="#25c283" fill-opacity="0.2"/><circle cx="966" cy="241.2" r="14.8" fill="#25c283" stroke="#fff" stroke-opacity="0.7" stroke-width="1.2"/>
<path d="M958.9 242.2 L963.5 246.3 L972.6 236.8" fill="none" stroke="#fff" stroke-width="2.8" stroke-linecap="round" stroke-linejoin="round"/>
<circle cx="878.4" cy="350.2" r="22.3" fill="#25c283" fill-opacity="0.2"/><circle cx="878.4" cy="350.2" r="14.8" fill="#25c283" stroke="#fff" stroke-opacity="0.7" stroke-width="1.2"/>
<path d="M871.3 351.2 L875.9 355.3 L885.0 345.8" fill="none" stroke="#fff" stroke-width="2.8" stroke-linecap="round" stroke-linejoin="round"/>
<circle cx="1064.9" cy="388.6" r="22.3" fill="#25c283" fill-opacity="0.2"/><circle cx="1064.9" cy="388.6" r="14.8" fill="#25c283" stroke="#fff" stroke-opacity="0.7" stroke-width="1.2"/>
<path d="M1057.8 389.6 L1062.4 393.7 L1071.5 384.2" fill="none" stroke="#fff" stroke-width="2.8" stroke-linecap="round" stroke-linejoin="round"/>
<circle cx="1633.5" cy="315.6" r="22.3" fill="#25c283" fill-opacity="0.2"/><circle cx="1633.5" cy="315.6" r="14.8" fill="#25c283" stroke="#fff" stroke-opacity="0.7" stroke-width="1.2"/>
<path d="M1626.4 316.6 L1631.0 320.7 L1640.1 311.2" fill="none" stroke="#fff" stroke-width="2.8" stroke-linecap="round" stroke-linejoin="round"/>
<circle cx="841" cy="621.7" r="22.3" fill="#25c283" fill-opacity="0.2"/><circle cx="841" cy="621.7" r="14.8" fill="#25c283" stroke="#fff" stroke-opacity="0.7" stroke-width="1.2"/>
<path d="M833.9 622.7 L838.5 626.8 L847.6 617.3" fill="none" stroke="#fff" stroke-width="2.8" stroke-linecap="round" stroke-linejoin="round"/>
<circle cx="906.7" cy="818.8" r="22.3" fill="#25c283" fill-opacity="0.2"/><circle cx="906.7" cy="818.8" r="14.8" fill="#25c283" stroke="#fff" stroke-opacity="0.7" stroke-width="1.2"/>
<path d="M899.6 819.8 L904.2 823.9 L913.3 814.4" fill="none" stroke="#fff" stroke-width="2.8" stroke-linecap="round" stroke-linejoin="round"/>
<circle cx="1506.7" cy="408.7" r="22.2" fill="#f0c000" fill-opacity="0.22"/><circle cx="1506.7" cy="408.7" r="14.8" fill="#f0c000" stroke="#fff" stroke-opacity="0.7" stroke-width="1.2"/>
<rect x="1505.0" y="399.8" width="3.3" height="12.2" rx="0.7" fill="#fff"/><circle cx="1506.7" cy="416.1" r="1.8" fill="#fff"/>
<circle cx="1010.6" cy="738.9" r="22.2" fill="#f0c000" fill-opacity="0.22"/><circle cx="1010.6" cy="738.9" r="14.8" fill="#f0c000" stroke="#fff" stroke-opacity="0.7" stroke-width="1.2"/>
<rect x="1008.9" y="730.0" width="3.3" height="12.2" rx="0.7" fill="#fff"/><circle cx="1010.6" cy="746.3" r="1.8" fill="#fff"/>
<circle cx="990.6" cy="507.8" r="30" fill="#ff8208" fill-opacity="0.2"/><circle cx="990.6" cy="507.8" r="17" fill="#ff8208" stroke="#fff" stroke-opacity="0.7" stroke-width="1.2"/>
<rect x="988.7" y="497.6" width="3.8" height="14.0" rx="0.8" fill="#fff"/><circle cx="990.6" cy="516.3" r="2.1" fill="#fff"/>
<circle cx="1050" cy="622.6" r="38.5" fill="#ff8208" fill-opacity="0.2"/><circle cx="1050" cy="622.6" r="22.7" fill="#ff8208" stroke="#fff" stroke-opacity="0.7" stroke-width="1.2"/>
<rect x="1047.5" y="609.0" width="5.1" height="18.7" rx="1.0" fill="#fff"/><circle cx="1050.0" cy="634.0" r="2.8" fill="#fff"/>
<circle cx="1198" cy="573.6" r="21" fill="#ff8208" fill-opacity="0.2"/><circle cx="1198" cy="573.6" r="12.8" fill="#ff8208" stroke="#fff" stroke-opacity="0.7" stroke-width="1.2"/>
<rect x="1196.6" y="565.9" width="2.9" height="10.5" rx="0.6" fill="#fff"/><circle cx="1198.0" cy="580.0" r="1.6" fill="#fff"/>
<circle cx="1334.7" cy="425.8" r="67" fill="#fae5e9" fill-opacity="0.92"/><circle cx="1334.7" cy="425.8" r="44" fill="#f7d3da" fill-opacity="0.95"/>
<line x1="1309.6" y1="433.5" x2="1007.6" y2="504" stroke="#e8102f" stroke-width="2.3"/>
<path d="M1158.1 468.0 L1167.1 456.5 L1171.3 474.4 Z" fill="#e8194a" stroke="#e8194a" stroke-width="1" stroke-linejoin="round"/>
<line x1="1311.6" y1="439.4" x2="1068" y2="611" stroke="#e8102f" stroke-width="2.3"/>
<path d="M1191.1 524.2 L1195.1 510.1 L1205.7 525.1 Z" fill="#e8194a" stroke="#e8194a" stroke-width="1" stroke-linejoin="round"/>
<line x1="1315.5" y1="447.3" x2="1207" y2="563.7" stroke="#e8102f" stroke-width="2.3"/>
<path d="M1258.0 509.4 L1259.1 494.7 L1272.5 507.3 Z" fill="#e8194a" stroke="#e8194a" stroke-width="1" stroke-linejoin="round"/>
<text x="1287" y="432" font-family="Liberation Sans, sans-serif" font-size="14" fill="#8a8a8a">Ma</text>
<circle cx="1334.7" cy="425.8" r="26.5" fill="#fff"/><circle cx="1334.7" cy="425.8" r="25.6" fill="#ea2457"/>
<path d="M1334.5 411.5 L1348 435.5 L1321 435.5 Z" fill="#fff" stroke="#fff" stroke-width="2.5" stroke-linejoin="round"/>
<rect x="1333.1" y="416.5" width="2.7" height="11" rx="1" fill="#ea2457"/><circle cx="1334.5" cy="431" r="1.6" fill="#ea2457"/>
</svg>
<div class="abs" style="left:870px;top:303px;width:503px;height:257px;border-radius:7px;box-shadow:50px 120px 220px rgba(80,60,180,0.26)"></div>
<div class="abs" style="left:0;top:0;width:1402px;height:789px;border-radius:5px;box-shadow:inset 1.5px 0 0 rgba(0,0,0,0.05),inset 0 -1px 0 rgba(0,0,0,0.04)"></div>
</div>
<div id="legend" class="abs">
<svg class="abs" style="left:0;top:0" width="192" height="192" viewBox="422 206 192 192">
 <circle cx="450.6" cy="238.5" r="13" fill="#23bb7c"/>
 <path d="M444.6 239.3 L448.6 243 L456.4 234.8" fill="none" stroke="#fff" stroke-width="2.7" stroke-linecap="round" stroke-linejoin="round"/>
 <circle cx="450.6" cy="280.8" r="13" fill="#f1bb00"/>
 <rect x="449.1" y="272.2" width="3" height="10.5" rx="1.3" fill="#fff"/><circle cx="450.6" cy="287.2" r="1.8" fill="#fff"/>
 <circle cx="450.6" cy="323" r="13" fill="#ff7f0a"/>
 <rect x="449.1" y="314.4" width="3" height="10.5" rx="1.3" fill="#fff"/><circle cx="450.6" cy="329.4" r="1.8" fill="#fff"/>
 <circle cx="450.6" cy="366" r="13" fill="#e5173f"/>
 <path d="M450.6 357.2 L459.6 373 L441.6 373 Z" fill="#fff" stroke="#fff" stroke-width="2" stroke-linejoin="round"/>
 <rect x="449.7" y="361.8" width="1.9" height="6.2" fill="#e5173f"/><circle cx="450.6" cy="370.3" r="1.1" fill="#e5173f"/>
</svg>
<div class="lg" style="top:22.7px">Optimal stock</div>
<div class="lg" style="top:65.1px">Overstock</div>
<div class="lg" style="top:107.5px">Low stock</div>
<div class="lg" style="top:149.9px">Expiring soon</div>
</div>
<div id="callout" class="abs">
<svg class="abs" style="left:0;top:0;overflow:visible" width="503" height="257" viewBox="1284 498 503 257">
 <path d="M1315 500 L1331 481.5 Q1333.5 479 1336 481.5 L1352 500 Z" fill="#1f1185"/>
 <circle cx="1335.2" cy="569.4" r="27.8" fill="#fde9f5"/>
 <circle cx="1335.2" cy="569.4" r="26.6" fill="#fae1f1"/>
 <path d="M1335 553.8 C1335.9 564.1999999999999 1340.2 568.5 1350.6 569.4 C1340.2 570.3 1335.9 574.6 1335 585.0 C1334.1 574.6 1329.8 570.3 1319.4 569.4 C1329.8 568.5 1334.1 564.1999999999999 1335 553.8 Z" fill="#e6139b"/>
 <path d="M1350.4 554.6 C1350.9 557.0 1351.8000000000002 557.9 1354.2 558.4 C1351.8000000000002 558.9 1350.9 559.8 1350.4 562.1999999999999 C1349.9 559.8 1349.0 558.9 1346.6000000000001 558.4 C1349.0 557.9 1349.9 557.0 1350.4 554.6 Z" fill="#e6139b"/>
 <path d="M1325.2 579.8000000000001 C1325.7 582.2 1326.6000000000001 583.1 1329.0 583.6 C1326.6000000000001 584.1 1325.7 585.0 1325.2 587.4 C1324.7 585.0 1323.8 584.1 1321.4 583.6 C1323.8 583.1 1324.7 582.2 1325.2 579.8000000000001 Z" fill="#e6139b"/>
</svg>
<p>Supply of craft beers in the<br>Water St. location is at risk of<br>expiration. Rebalance to nearby<br>locations with high demand and<br>critical stock levels.</p></div>
</body></html>
